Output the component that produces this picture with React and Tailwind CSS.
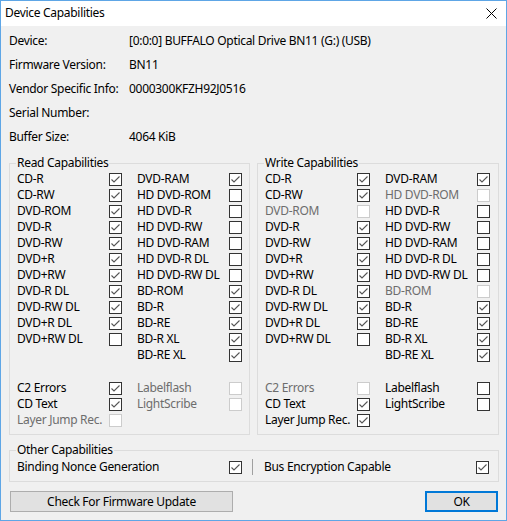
const font = { fontFamily: '"Noto Sans", "Liberation Sans", sans-serif' }

const info = [
  ['Device:', '[0:0:0] BUFFALO Optical Drive BN11 (G:) (USB)'],
  ['Firmware Version:', 'BN11'],
  ['Vendor Specific Info:', '0000300KFZH92J0516'],
  ['Serial Number:', ''],
  ['Buffer Size:', '4064 KiB'],
]

// [label, checked, disabled]
const read1 = [
  ['CD-R', 1], ['CD-RW', 1], ['DVD-ROM', 1], ['DVD-R', 1], ['DVD-RW', 1], ['DVD+R', 1],
  ['DVD+RW', 1], ['DVD-R DL', 1], ['DVD-RW DL', 1], ['DVD+R DL', 1], ['DVD+RW DL', 0],
]
const read2 = [
  ['DVD-RAM', 1], ['HD DVD-ROM', 0], ['HD DVD-R', 0], ['HD DVD-RW', 0], ['HD DVD-RAM', 0],
  ['HD DVD-R DL', 0], ['HD DVD-RW DL', 0], ['BD-ROM', 1], ['BD-R', 1], ['BD-RE', 1],
  ['BD-R XL', 1], ['BD-RE XL', 1],
]
const write1 = [
  ['CD-R', 1], ['CD-RW', 1], ['DVD-ROM', 0, 1], ['DVD-R', 1], ['DVD-RW', 1], ['DVD+R', 1],
  ['DVD+RW', 1], ['DVD-R DL', 1], ['DVD-RW DL', 1], ['DVD+R DL', 1], ['DVD+RW DL', 0],
]
const write2 = [
  ['DVD-RAM', 1], ['HD DVD-ROM', 0, 1], ['HD DVD-R', 0], ['HD DVD-RW', 0], ['HD DVD-RAM', 0],
  ['HD DVD-R DL', 0], ['HD DVD-RW DL', 0], ['BD-ROM', 0, 1], ['BD-R', 1], ['BD-RE', 1],
  ['BD-R XL', 1], ['BD-RE XL', 1],
]
const readExtra1 = [['C2 Errors', 1], ['CD Text', 1], ['Layer Jump Rec.', 0, 1]]
const readExtra2 = [['Labelflash', 0, 1], ['LightScribe', 0, 1]]
const writeExtra1 = [['C2 Errors', 0, 1], ['CD Text', 1], ['Layer Jump Rec.', 1]]
const writeExtra2 = [['Labelflash', 0], ['LightScribe', 0]]

function Check({ checked, disabled }) {
  return (
    <span
      className={`w-[13px] h-[13px] shrink-0 border flex items-center justify-center ${
        disabled ? 'border-[#cccccc] bg-white' : 'border-[#333333] bg-white'
      }`}
    >
      {checked ? (
        <svg width="11" height="11" viewBox="0 0 11 11">
          <path d="M1.5 5.5 L4 8 L9.5 2.5" fill="none" stroke="#555" strokeWidth="1.1" />
        </svg>
      ) : null}
    </span>
  )
}

function Item({ label, checked, disabled }) {
  return (
    <div className="h-[16px] flex items-center">
      <span className={`w-[92px] whitespace-nowrap ${disabled ? 'text-[#6d6d6d]' : 'text-black'}`}>{label}</span>
      <Check checked={checked} disabled={disabled} />
    </div>
  )
}

function Column({ items }) {
  return (
    <div className="flex flex-col">
      {items.map(([l, c, d]) => <Item key={l} label={l} checked={c} disabled={d} />)}
    </div>
  )
}

function Group({ title, c1, c2, e1, e2, width }) {
  return (
    <fieldset className={`${width} border border-[#dcdcdc] pl-[7px] pb-[6px]`}>
      <legend className="-ml-[1px] px-[1px] h-[16px] leading-[16px]">{title}</legend>
      <div className="flex gap-x-[15px] items-start">
        <Column items={c1} />
        <Column items={c2} />
      </div>
      <div className="flex gap-x-[15px] items-start mt-[17px]">
        <Column items={e1} />
        <Column items={e2} />
      </div>
    </fieldset>
  )
}

export default function App() {
  return (
    <div
      style={font}
      className="w-[507px] h-[521px] border border-[#5ea6e6] bg-[#f0f0f0] flex flex-col text-[12px] tracking-[-0.3px] text-black"
    >
      {/* Title bar */}
      <div className="h-[25px] bg-white flex items-center justify-between pl-[4px] pr-[9px] pb-[1px] shrink-0">
        <span>Device Capabilities</span>
        <svg width="11" height="11" viewBox="0 0 11 11">
          <path d="M0.5 0.5 L10.5 10.5 M10.5 0.5 L0.5 10.5" stroke="#000" strokeWidth="1" />
        </svg>
      </div>

      <div className="flex-1 flex flex-col pl-[8px] pr-[7px] pt-[3px]">
        {/* Info rows */}
        {info.map(([k, v]) => (
          <div key={k} className="h-[24px] flex items-center">
            <span className="w-[120px] whitespace-nowrap">{k}</span>
            <span className="whitespace-nowrap">{v}</span>
          </div>
        ))}

        <div className="flex gap-[7px] mt-[6px]">
          <Group title="Read Capabilities" c1={read1} c2={read2} e1={readExtra1} e2={readExtra2} width="w-[241px]" />
          <Group title="Write Capabilities" c1={write1} c2={write2} e1={writeExtra1} e2={writeExtra2} width="w-[242px]" />
        </div>

        {/* Other capabilities */}
        <fieldset className="mt-[7px] border border-[#dcdcdc] pl-[7px] pb-[6px]">
          <legend className="-ml-[1px] px-[1px] h-[16px] leading-[16px]">Other Capabilities</legend>
          <div className="flex items-center h-[16px] mt-[1px]">
            <span className="w-[212px] whitespace-nowrap">Binding Nonce Generation</span>
            <Check checked />
            <span className="ml-[10px] w-px h-[16px] bg-[#a0a0a0]" />
            <span className="ml-[11px] w-[212px] whitespace-nowrap">Bus Encryption Capable</span>
            <Check checked />
          </div>
        </fieldset>

        {/* Buttons */}
        <div className="flex justify-between mt-[9px] pl-[1px] pr-px">
          <button className="w-[223px] h-[21px] border border-[#adadad] bg-[#e1e1e1] leading-none">
            Check For Firmware Update
          </button>
          <button className="w-[73px] h-[21px] border-2 border-[#0078d7] bg-[#e1e1e1] leading-none">
            OK
          </button>
        </div>
      </div>
    </div>
  )
}
